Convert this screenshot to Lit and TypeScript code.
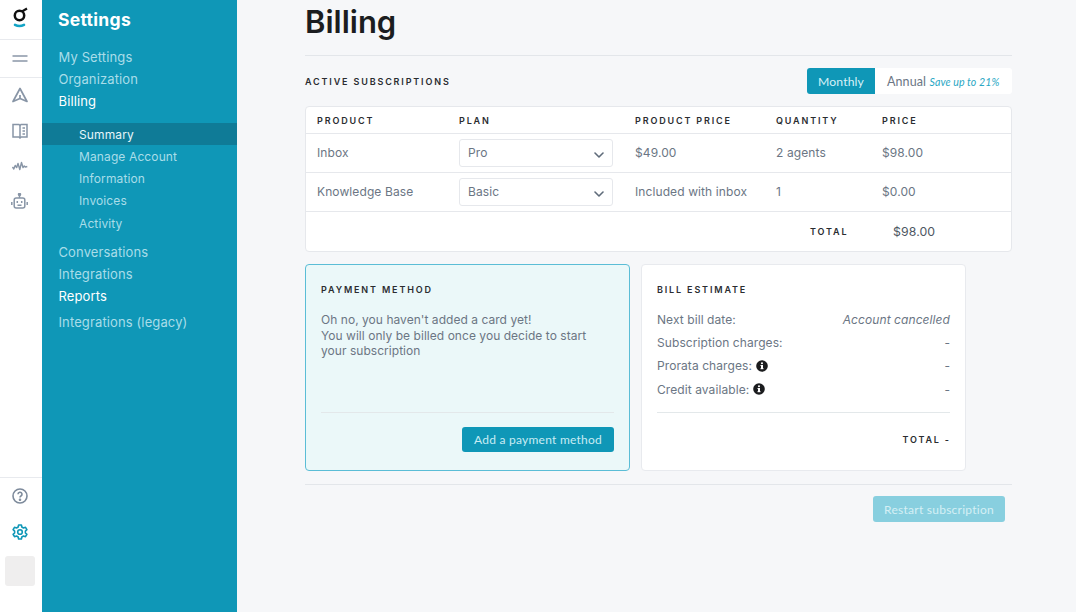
import { LitElement, html, css } from "lit";
import { customElement } from "lit/decorators.js";

const chevron = html`<svg class="chev" width="10" height="6" viewBox="0 0 10 6" fill="none" stroke="#5f6b7a" stroke-width="1.6" stroke-linecap="round" stroke-linejoin="round"><path d="M1 1l4 4 4-4"/></svg>`;
const info = html`<svg class="info" width="12" height="12" viewBox="0 0 12 12"><circle cx="6" cy="6" r="5.8" fill="#1b1c1e"/><rect x="5" y="5" width="2" height="4" fill="#fff"/><rect x="4.5" y="8.2" width="3" height="1" fill="#fff"/><rect x="4.5" y="5" width="1.5" height="1" fill="#fff"/><circle cx="6" cy="3.3" r="1.05" fill="#fff"/></svg>`;

@customElement("app-root")
export class AppRoot extends LitElement {
  static styles = css`
    :host { display: block; width: 1076px; height: 612px; overflow: hidden; font-family: Inter, "Liberation Sans", sans-serif; color: #6b7684; background: #f6f7f9; }
    * { box-sizing: border-box; }
    .page { display: flex; height: 612px; }
    .rail { width: 42px; flex: none; background: #fff; display: flex; flex-direction: column; }
    .logo { height: 40px; border-bottom: 1px solid #e8eaee; display: flex; justify-content: center; padding: 7px 3px 0 0; }
    .menu { height: 38px; border-bottom: 1px solid #e8eaee; display: flex; justify-content: center; align-items: center; padding-right: 3px; }
    .railnav { display: flex; flex-direction: column; flex: 1; padding-top: 0; }
    .slot { height: 35.2px; display: flex; align-items: center; justify-content: center; padding-right: 3px; }
    .slot:first-child { padding-bottom: 1px; }
    .railbottom { border-top: 1px solid #e8eaee; height: 135px; display: flex; flex-direction: column; align-items: center; padding: 10px 3px 0 0; }
    .railbottom .gear { margin-top: 20px; }
    .avatar { width: 30px; height: 30px; border-radius: 3px; background: #efeeee; margin: 16px 0 0 1px; }
    .side { width: 195px; flex: none; background: #0f97b7; padding-top: 9px; color: #a9dde9; font-size: 13px; letter-spacing: 0.12px; }
    .side h2 { margin: 0 0 15px 16px; font-size: 17.5px; line-height: 22px; font-weight: 700; color: #fff; letter-spacing: 0.3px; }
    .item { height: 22.2px; line-height: 22px; padding-left: 16.5px; white-space: nowrap; }
    .on { color: #fff; }
    .subs { padding: 10px 0 7px; font-size: 12px; }
    .sub { height: 22.25px; line-height: 24px; padding-left: 37px; }
    .sub.cur { background: #0f7b97; color: #e6f6fa; }
    .legacy { margin-top: 4px; }
    .main { flex: 1; padding: 0 64px 0 68px; }
    h1 { margin: 0; height: 55px; padding-top: 3px; font-size: 31px; line-height: 38px; font-weight: 600; color: #1b1d20; letter-spacing: 0; }
    .rule { height: 1px; background: #e3e6ea; }
    .caps { font-size: 9px; font-weight: 600; letter-spacing: 1.85px; color: #2a2c30; white-space: nowrap; }
    .subhead { display: flex; justify-content: space-between; align-items: center; height: 50px; }
    .toggle { display: flex; width: 205px; height: 26px; background: #fff; border-radius: 3px; font-family: Lato, sans-serif; font-size: 12.5px; align-items: center; }
    .toggle .m { width: 68px; height: 26px; background: #0f97b7; color: #d8f1f7; border-radius: 3px 0 0 3px; display: flex; align-items: center; justify-content: center; font-size: 12.2px; letter-spacing: 0.1px; }
    .toggle .a { padding-left: 12px; white-space: nowrap; letter-spacing: 0.1px; color: #6b7684; }
    .toggle em { color: #2aa7c4; font-size: 10.6px; }
    .table { background: #fff; border: 1px solid #e6e8ec; border-radius: 4px; height: 146px; }
    .row { display: grid; grid-template-columns: 142px 176px 141px 106px 1fr; padding-left: 11px; align-items: center; border-bottom: 1px solid #e6e8ec; height: 39px; font-size: 12px; letter-spacing: 0.1px; }
    .row > div { padding-bottom: 2px; }
    .row.head { height: 27px; }
    .row.head > div { padding-bottom: 0; }
    .row.total { border: 0; height: 39px; grid-template-columns: 493px 83px 1fr; color: #4e5763; font-size: 12.3px; }
    .row.total > div { padding-bottom: 0; }
    .row > .select { width: 154px; height: 28px; border: 1px solid #e6e8ec; border-radius: 3px; background: #fff; padding: 0 8px 2px 8px; display: flex; align-items: center; justify-content: space-between; }
    .chev { margin-top: 6px; }
    .cards { display: flex; gap: 11px; margin-top: 12px; }
    .card { width: 325px; height: 207px; border-radius: 4px; border: 1px solid #e8eaee; background: #fff; padding: 19px 15px 0 15px; display: flex; flex-direction: column; }
    .card.pay { background: #ebf8f9; border-color: #5bbdd6; }
    .card .caps { line-height: 11px; }
    .text { margin-top: 17px; font-size: 12px; line-height: 15.7px; height: 100px; letter-spacing: 0.04px; }
    .cardrule { height: 1px; background: #e3e8ea; }
    .actions { display: flex; justify-content: flex-end; padding-top: 14px; }
    .btn { height: 25px; border-radius: 3px; background: #0f97b7; color: #c9ecf4; font-family: Lato, sans-serif; font-size: 12px; letter-spacing: 0.25px; display: flex; align-items: center; justify-content: center; }
    .addbtn { width: 152px; }
    .lines { margin-top: 13px; height: 104px; font-size: 12px; letter-spacing: 0.08px; }
    .line { display: flex; justify-content: space-between; align-items: center; height: 23.2px; }
    .line span:first-child { display: flex; align-items: center; gap: 4px; }
    .line i { font-style: italic; }
    .tot { display: flex; justify-content: flex-end; gap: 4px; padding-top: 21px; padding-right: 1px; }
    .tot span:last-child { letter-spacing: 0; }
    .bottomrule { margin-top: 13px; width: 707px; }
    .footer { display: flex; justify-content: flex-end; padding: 11px 7px 0 0; }
    .restart { width: 132px; height: 26px; background: #88cfdf; color: #d5eff5; }
  `;

  render() {
    return html`<div class="page">
      <nav class="rail">
        <div class="logo">
          <svg width="16" height="21" viewBox="0 0 16 21" fill="none"><circle cx="7.5" cy="8.5" r="4.7" stroke="#111" stroke-width="2.5"/><path d="M10 4.4 15 1.6" stroke="#111" stroke-width="2.3"/><path d="M3 17.8c2.6 1.5 6.4 1.5 9 0" stroke="#12a4c6" stroke-width="2.5" stroke-linecap="round"/></svg>
        </div>
        <div class="menu"><svg width="16" height="7" viewBox="0 0 16 7" stroke="#8b97a8" stroke-width="1.7"><path d="M.5 1h15M.5 6h15"/></svg></div>
        <div class="railnav">
          <div class="slot"><svg width="16" height="16" viewBox="0 0 16 16" fill="none" stroke="#8895a6" stroke-width="1.7" stroke-linejoin="round"><path d="M8 1.5 15 14.5l-7-3-7 3z"/><path d="M8 11.5V8"/></svg></div>
          <div class="slot"><svg width="16" height="16" viewBox="0 0 16 16" fill="none" stroke="#8895a6" stroke-width="1.5"><path d="M1 1.5h6l1 1 1-1h6v12.5H9l-1 1-1-1H1z"/><path d="M8 2.5V14M10.5 5H13M10.5 8H13M10.5 11H13"/></svg></div>
          <div class="slot"><svg width="16" height="10" viewBox="0 0 16 10" fill="none" stroke="#8895a6" stroke-width="1.4" stroke-linejoin="round"><path d="M.5 6 1.8 8l1.4-3.5L4.7 6.5 6 2.5l1.8 6L9.5 1.5 11 6.5l1.3-1.5 1 1 2-.5"/></svg></div>
          <div class="slot"><svg width="17" height="16" viewBox="0 0 17 16" fill="none" stroke="#8895a6" stroke-width="1.5"><path d="M8.5 1v4"/><circle cx="8.5" cy="1.5" r="1" fill="#8895a6"/><rect x="3.2" y="5" width="10.6" height="10" rx="2"/><path d="M.8 9v3M16.2 9v3M6.3 8v2M10.7 8v2M6.5 12.2h4"/></svg></div>
        </div>
        <div class="railbottom">
          <svg width="16" height="16" viewBox="0 0 16 16" fill="none" stroke="#7d8a9b" stroke-width="1.6"><circle cx="8" cy="8" r="7"/><path d="M6 6.3a2 2 0 1 1 3 1.7c-.7.4-1 .8-1 1.5"/><circle cx="8" cy="11.8" r=".5" fill="#7d8a9b"/></svg>
          <svg class="gear" width="16" height="16" viewBox="0 0 16 16" fill="none" stroke="#0f97b7" stroke-width="1.6" stroke-linejoin="round"><path d="M6.6 1h2.8l.4 2 1.7 1 2-.7 1.4 2.4-1.5 1.4v1.8l1.5 1.4-1.4 2.4-2-.7-1.7 1-.4 2H6.6l-.4-2-1.7-1-2 .7-1.4-2.4 1.5-1.4V7.1L1.1 5.7l1.4-2.4 2 .7 1.7-1z"/><circle cx="8" cy="8" r="2.3"/></svg>
          <div class="avatar"></div>
        </div>
      </nav>
      <aside class="side">
        <h2>Settings</h2>
        <div class="item">My Settings</div>
        <div class="item">Organization</div>
        <div class="item on">Billing</div>
        <div class="subs">
          <div class="sub cur">Summary</div>
          <div class="sub">Manage Account</div>
          <div class="sub">Information</div>
          <div class="sub">Invoices</div>
          <div class="sub">Activity</div>
        </div>
        <div class="item">Conversations</div>
        <div class="item">Integrations</div>
        <div class="item on">Reports</div>
        <div class="item legacy">Integrations (legacy)</div>
      </aside>
      <main class="main">
        <h1>Billing</h1>
        <div class="rule"></div>
        <div class="subhead">
          <div class="caps">ACTIVE SUBSCRIPTIONS</div>
          <div class="toggle"><div class="m">Monthly</div><div class="a">Annual <em>Save up to 21%</em></div></div>
        </div>
        <div class="table">
          <div class="row head"><div class="caps">PRODUCT</div><div class="caps">PLAN</div><div class="caps">PRODUCT PRICE</div><div class="caps">QUANTITY</div><div class="caps">PRICE</div></div>
          <div class="row"><div>Inbox</div><div class="select">Pro ${chevron}</div><div>$49.00</div><div>2 agents</div><div>$98.00</div></div>
          <div class="row"><div>Knowledge Base</div><div class="select">Basic ${chevron}</div><div>Included with inbox</div><div>1</div><div>$0.00</div></div>
          <div class="row total"><div class="caps"></div><div class="caps">TOTAL</div><div>$98.00</div></div>
        </div>
        <div class="cards">
          <section class="card pay">
            <div class="caps">PAYMENT METHOD</div>
            <div class="text">Oh no, you haven't added a card yet!<br>You will only be billed once you decide to start your subscription</div>
            <div class="cardrule"></div>
            <div class="actions"><div class="btn addbtn">Add a payment method</div></div>
          </section>
          <section class="card">
            <div class="caps">BILL ESTIMATE</div>
            <div class="lines">
              <div class="line"><span>Next bill date:</span><i>Account cancelled</i></div>
              <div class="line"><span>Subscription charges:</span><span>-</span></div>
              <div class="line"><span>Prorata charges: ${info}</span><span>-</span></div>
              <div class="line"><span>Credit available: ${info}</span><span>-</span></div>
            </div>
            <div class="cardrule"></div>
            <div class="tot caps"><span>TOTAL</span><span>-</span></div>
          </section>
        </div>
        <div class="rule bottomrule"></div>
        <div class="footer"><div class="btn restart">Restart subscription</div></div>
      </main>
    </div>`;
  }
}
